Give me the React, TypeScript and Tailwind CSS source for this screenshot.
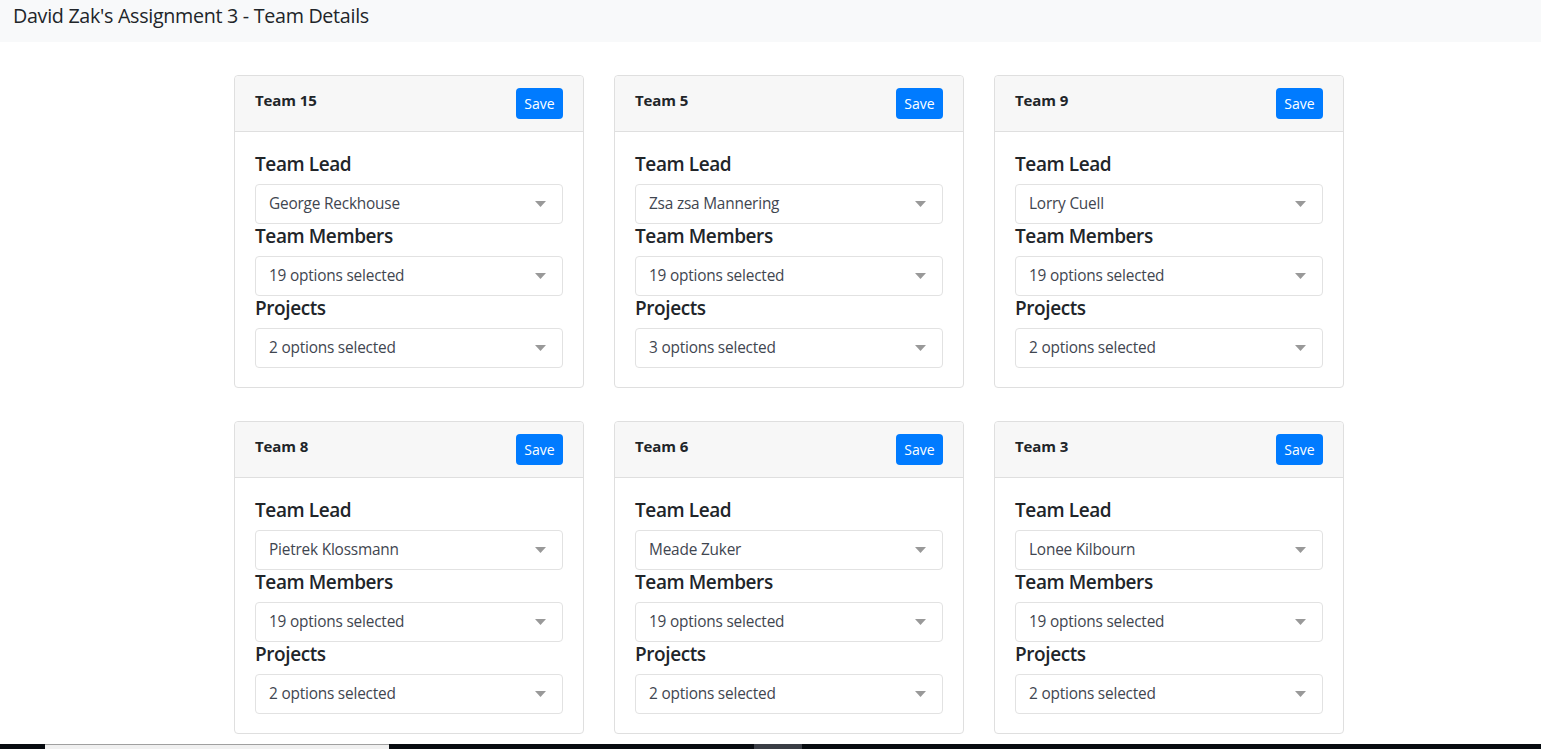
import React from 'react';

interface Team {
  name: string;
  lead: string;
  members: number;
  projects: number;
}

const TEAMS: Team[] = [
  { name: 'Team 15', lead: 'George Reckhouse', members: 19, projects: 2 },
  { name: 'Team 5', lead: 'Zsa zsa Mannering', members: 19, projects: 3 },
  { name: 'Team 9', lead: 'Lorry Cuell', members: 19, projects: 2 },
  { name: 'Team 8', lead: 'Pietrek Klossmann', members: 19, projects: 2 },
  { name: 'Team 6', lead: 'Meade Zuker', members: 19, projects: 2 },
  { name: 'Team 3', lead: 'Lonee Kilbourn', members: 19, projects: 2 },
];

const FONT = "font-['Open_Sans','Noto_Sans',sans-serif]";

const FakeSelect: React.FC<{ value: string }> = ({ value }) => (
  <div className="h-10 w-full rounded border border-[#e2e2e2] bg-white flex items-center justify-between pl-[13px] pr-[16px]">
    <span className="text-[15.4px] text-[#3f4650] tracking-[-0.2px]">{value}</span>
    <svg width="11" height="6" viewBox="0 0 11 6" className="fill-[#999]">
      <path d="M0 0h11L5.5 6z" />
    </svg>
  </div>
);

const Field: React.FC<{ label: string; value: string }> = ({ label, value }) => (
  <div>
    <div className="text-[19px] leading-[25px] font-semibold text-[#212529] mb-[7px] tracking-[-0.4px]">{label}</div>
    <FakeSelect value={value} />
  </div>
);

const TeamCard: React.FC<{ team: Team }> = ({ team }) => (
  <div className="w-[350px] border border-[#dfdfdf] rounded bg-white">
    <div className="h-[56px] bg-[#f7f7f7] border-b border-[#dfdfdf] rounded-t px-5 pt-3 flex justify-between items-start">
      <div className="text-[15px] leading-6 font-bold text-[#212529] tracking-[-0.1px]">{team.name}</div>
      <button className="h-[31px] w-[47px] rounded bg-[#007bff] text-white text-[14px] leading-none">Save</button>
    </div>
    <div className="px-5 pt-5 pb-[19px]">
      <Field label="Team Lead" value={team.lead} />
      <Field label="Team Members" value={`${team.members} options selected`} />
      <Field label="Projects" value={`${team.projects} options selected`} />
    </div>
  </div>
);

export default function App() {
  return (
    <div className={`${FONT} min-h-screen bg-white`}>
      <nav className="h-[42px] bg-[#f8f9fa] pl-[13px] pt-[2px]">
        <span className="text-[19.7px] leading-7 text-[#212529] tracking-[-0.3px]">David Zak's Assignment 3 - Team Details</span>
      </nav>
      <div className="ml-[234px] mt-[33px] w-[1110px] grid grid-cols-3 gap-x-[30px] gap-y-[33px]">
        {TEAMS.map((t) => (
          <TeamCard key={t.name} team={t} />
        ))}
      </div>
      <div className="fixed bottom-0 left-0 right-0 h-[5px] flex bg-[#070b10]">
        <div className="w-[45px]" />
        <div className="w-[344px] bg-[#f0f0f0] border-t border-[#a0a0a0]" />
        <div className="w-[365px]" />
        <div className="w-[48px] bg-[#3a3d45]" />
      </div>
    </div>
  );
}
